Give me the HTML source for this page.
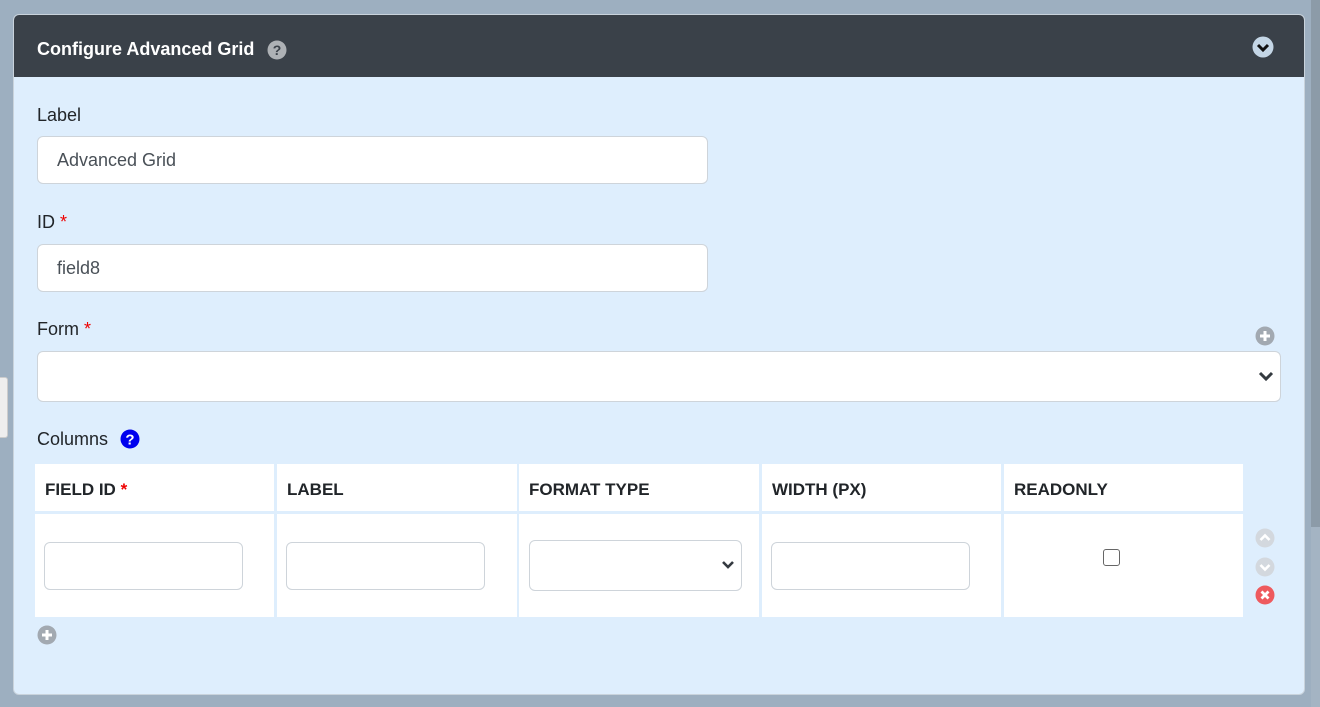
<!DOCTYPE html>
<html><head><style>
*{box-sizing:border-box;margin:0;padding:0}
body{width:1320px;height:707px;background:#9dafc0;font-family:"Liberation Sans",sans-serif;position:relative;overflow:hidden;color:#212529}
.abs{position:absolute}
.panel{left:13px;top:14px;width:1292px;height:681px;background:#deeefd;border:1px solid #c9d3dc;border-radius:6px;overflow:hidden}
.hdr{left:0;top:0;width:100%;height:62px;background:#3a4149;color:#fff;font-weight:bold;font-size:18px}
.lbl{font-size:18px;color:#212529}
.req{color:#e00}
.inp{background:#fff;border:1px solid #ced4da;border-radius:6px;font-size:18px;color:#495057;padding-left:19px;display:flex;align-items:center}
.cell{background:#fff}
.th{font-weight:bold;font-size:17px;padding:16px 0 0 10px}
.sm{background:#fff;border:1px solid #ced4da;border-radius:6px}
</style></head><body>
<div class="abs" style="left:1311px;top:0;width:9px;height:707px;background:#a4b4c3"></div>
<div class="abs" style="left:1311px;top:0;width:9px;height:527px;background:#8c9ba8"></div>
<div class="abs" style="left:0;top:377px;width:8px;height:61px;background:#eee;border:1px solid #ccc;border-left:none;border-radius:0 3px 3px 0"></div>
<div class="abs panel">
 <div class="abs hdr"><span class="abs" style="left:23px;top:24px">Configure Advanced Grid</span>
  <svg class="abs" style="left:253px;top:25px" width="20" height="20" viewBox="0 0 20 20"><circle cx="10" cy="10" r="9.5" fill="#adb1b5"/><text x="10" y="15" text-anchor="middle" font-size="14" font-weight="bold" fill="#3a4149" font-family="Liberation Sans">?</text></svg>
  <svg class="abs" style="left:1238px;top:21px" width="22" height="22" viewBox="0 0 22 22"><circle cx="11" cy="11" r="10.5" fill="#c4d6e6"/><path d="M6 9l5 5 5-5" stroke="#111" stroke-width="3" fill="none"/></svg>
 </div>
 <div class="abs lbl" style="left:23px;top:90px">Label</div>
 <div class="abs inp" style="left:23px;top:121px;width:671px;height:48px">Advanced Grid</div>
 <div class="abs lbl" style="left:23px;top:197px">ID <span class="req">*</span></div>
 <div class="abs inp" style="left:23px;top:229px;width:671px;height:48px">field8</div>
 <div class="abs lbl" style="left:23px;top:304px">Form <span class="req">*</span></div>
 <svg class="abs" style="left:1241px;top:311px" width="20" height="20" viewBox="0 0 20 20"><circle cx="10" cy="10" r="9.5" fill="#a2a9b1"/><path d="M10 5v10M5 10h10" stroke="#fff" stroke-width="3"/></svg>
 <div class="abs inp" style="left:23px;top:336px;width:1244px;height:51px"></div>
 <svg class="abs" style="left:1244px;top:355px" width="16" height="12" viewBox="0 0 16 12"><path d="M2 3l6 6 6-6" stroke="#343a40" stroke-width="3" fill="none"/></svg>
 <div class="abs lbl" style="left:23px;top:414px">Columns</div>
 <svg class="abs" style="left:106px;top:414px" width="20" height="20" viewBox="0 0 20 20"><circle cx="10" cy="10" r="9.5" fill="#0000ee"/><text x="10" y="15.5" text-anchor="middle" font-size="15" font-weight="bold" fill="#fff" font-family="Liberation Sans">?</text></svg>
 <div class="abs cell th" style="left:21px;top:449px;width:239px;height:47px">FIELD ID <span class="req">*</span></div>
 <div class="abs cell th" style="left:263px;top:449px;width:240px;height:47px">LABEL</div>
 <div class="abs cell th" style="left:505px;top:449px;width:240px;height:47px">FORMAT TYPE</div>
 <div class="abs cell th" style="left:748px;top:449px;width:239px;height:47px">WIDTH (PX)</div>
 <div class="abs cell th" style="left:990px;top:449px;width:239px;height:47px">READONLY</div>
 <div class="abs cell" style="left:21px;top:499px;width:239px;height:103px"><div class="abs sm" style="left:9px;top:28px;width:199px;height:48px"></div></div>
 <div class="abs cell" style="left:263px;top:499px;width:240px;height:103px"><div class="abs sm" style="left:9px;top:28px;width:199px;height:48px"></div></div>
 <div class="abs cell" style="left:505px;top:499px;width:240px;height:103px"><div class="abs sm" style="left:10px;top:26px;width:213px;height:51px"></div><svg class="abs" style="left:202px;top:46px" width="14" height="10" viewBox="0 0 14 10"><path d="M2 2l5 5 5-5" stroke="#343a40" stroke-width="2.6" fill="none"/></svg></div>
 <div class="abs cell" style="left:748px;top:499px;width:239px;height:103px"><div class="abs sm" style="left:9px;top:28px;width:199px;height:48px"></div></div>
 <div class="abs cell" style="left:990px;top:499px;width:239px;height:103px"><div class="abs" style="left:99px;top:35px;width:17px;height:17px;border:1.5px solid #666;border-radius:3px"></div></div>
 <svg class="abs" style="left:1241px;top:513px" width="20" height="20" viewBox="0 0 20 20"><circle cx="10" cy="10" r="9.5" fill="#d3d8de"/><path d="M5.5 12l4.5-4.5 4.5 4.5" stroke="#fff" stroke-width="2.6" fill="none"/></svg>
 <svg class="abs" style="left:1241px;top:542px" width="20" height="20" viewBox="0 0 20 20"><circle cx="10" cy="10" r="9.5" fill="#d3d8de"/><path d="M5.5 8l4.5 4.5 4.5-4.5" stroke="#fff" stroke-width="2.6" fill="none"/></svg>
 <svg class="abs" style="left:1241px;top:570px" width="20" height="20" viewBox="0 0 20 20"><circle cx="10" cy="10" r="9.5" fill="#ee5a5e"/><path d="M6.5 6.5l7 7M13.5 6.5l-7 7" stroke="#fff" stroke-width="2.8"/></svg>
 <svg class="abs" style="left:23px;top:610px" width="20" height="20" viewBox="0 0 20 20"><circle cx="10" cy="10" r="9.5" fill="#a2a9b1"/><path d="M10 5v10M5 10h10" stroke="#fff" stroke-width="3"/></svg>
</div>
</body></html>
